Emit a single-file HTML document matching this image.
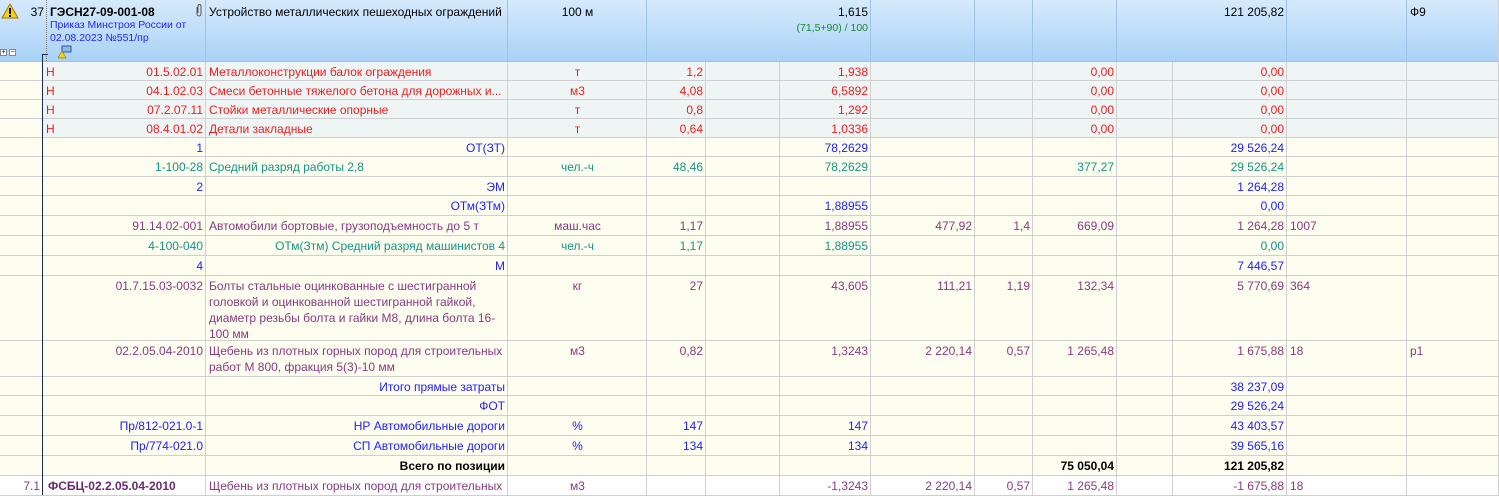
<!DOCTYPE html>
<html><head><meta charset="utf-8"><style>
*{margin:0;padding:0;box-sizing:border-box}
body{width:1499px;height:493px;overflow:hidden;background:#fdfdf0;font-family:"Liberation Sans",sans-serif;font-size:12px;position:relative}
.r{position:absolute;left:0;width:1499px;display:flex;border-bottom:1px solid #cfcfcf}
.c{height:100%;border-right:1px solid #d0d0d0;padding:2px 2px 0 3px;white-space:nowrap;overflow:hidden;line-height:16px}
.R{text-align:right}.C{text-align:center}.L{text-align:left}
.red{color:#f01c1c}.blu{color:#2020ff}.tea{color:#169484}.pur{color:#8a3a80}.blk{color:#000}
.w{white-space:normal}
</style></head><body>
<div class="r" style="top:0;height:62px;background:linear-gradient(#d6eafc,#a9d2f7);border-bottom:1px solid #9cc3e6">
 <div class="c R" style="width:47px;border-right:1px dotted #777;font-size:12px;padding-top:4px">37</div>
 <div class="c" style="width:159px;padding-top:4px;border-right-color:#9cc3e6"><b style="font-size:12px">ГЭСН27-09-001-08</b><div style="color:#2424ff;font-size:10.5px;line-height:13px;white-space:normal;margin-top:-1px">Приказ Минстроя России от 02.08.2023 №551/пр</div></div>
 <div class="c" style="width:302px;padding-top:4px;border-right-color:#9cc3e6">Устройство металлических пешеходных ограждений</div>
 <div class="c C" style="width:139px;padding-top:4px;border-right-color:#9cc3e6">100 м</div>
 <div class="c R" style="width:224px;padding-top:4px;border-right-color:#9cc3e6">1,615<div style="color:#1a8a2a;font-size:10.5px">(71,5+90) / 100</div></div>
 <div class="c" style="width:104px;border-right-color:#9cc3e6"></div>
 <div class="c" style="width:58px;border-right-color:#9cc3e6"></div>
 <div class="c" style="width:84px;border-right-color:#9cc3e6"></div>
 <div class="c R" style="width:170px;padding-top:4px;border-right-color:#9cc3e6">121 205,82</div>
 <div class="c" style="width:120px;border-right-color:#9cc3e6"></div>
 <div class="c" style="width:92px;padding-top:4px">Ф9</div>
</div>
<svg style="position:absolute;left:1px;top:3px" width="18" height="16"><path d="M9 1L17 15H1Z" fill="#f3d21a" stroke="#a07a00"/><rect x="8" y="5" width="2" height="6" fill="#000"/><rect x="8" y="12" width="2" height="2" fill="#000"/></svg>
<svg style="position:absolute;left:195px;top:3px" width="8" height="14"><path d="M2 4v7a2 2 0 0 0 4 0V3a1.3 1.3 0 0 0-3 0v7" fill="none" stroke="#555" stroke-width="1"/></svg>
<div style="position:absolute;left:0;top:49px;width:7px;height:7px;border:1px solid #888;background:#fff;font-size:7px;line-height:5px;text-align:center">+</div>
<div style="position:absolute;left:9px;top:49px;width:7px;height:7px;border:1px solid #888;background:#fff;font-size:7px;line-height:5px;text-align:center">−</div>
<svg style="position:absolute;left:58px;top:45px" width="14" height="14"><rect x="4" y="1" width="9" height="6" fill="#8fb5e0" stroke="#2a5aa0"/><path d="M4 6L8 13H0Z" fill="#f3d21a" stroke="#a07a00" stroke-width=".7"/></svg>
<div id="rows"></div>
<script>
const W=[47,159,302,139,59,74,91,104,58,84,56,114,120,92];
const rows=[
[62,19,'g','red',['','Н|01.5.02.01','Металлоконструкции балок ограждения','т','1,2','','1,938','','','0,00','','0,00','','']],
[81,19,'g','red',['','Н|04.1.02.03','Смеси бетонные тяжелого бетона для дорожных и...','м3','4,08','','6,5892','','','0,00','','0,00','','']],
[100,19,'g','red',['','Н|07.2.07.11','Стойки металлические опорные','т','0,8','','1,292','','','0,00','','0,00','','']],
[119,19,'g','red',['','Н|08.4.01.02','Детали закладные','т','0,64','','1,0336','','','0,00','','0,00','','']],
[138,19,'y','blu',['','1','>ОТ(ЗТ)','','','','78,2629','','','','','29 526,24','','']],
[157,20,'y','tea',['','1-100-28','Средний разряд работы 2,8','чел.-ч','48,46','','78,2629','','','377,27','','29 526,24','','']],
[177,19,'y','blu',['','2','>ЭМ','','','','','','','','','1 264,28','','']],
[196,20,'y','blu',['','','>ОТм(ЗТм)','','','','1,88955','','','','','0,00','','']],
[216,20,'y','pur',['','91.14.02-001','Автомобили бортовые, грузоподъемность до 5 т','маш.час','1,17','','1,88955','477,92','1,4','669,09','','1 264,28','<1007','']],
[236,20,'y','tea',['','4-100-040','>ОТм(Зтм) Средний разряд машинистов 4','чел.-ч','1,17','','1,88955','','','','','0,00','','']],
[256,20,'y','blu',['','4','>М','','','','','','','','','7 446,57','','']],
[276,65,'y','pur',['','01.7.15.03-0032','~Болты стальные оцинкованные с шестигранной головкой и оцинкованной шестигранной гайкой, диаметр резьбы болта и гайки М8, длина болта 16-100 мм','кг','27','','43,605','111,21','1,19','132,34','','5 770,69','<364','']],
[341,36,'y','pur',['','02.2.05.04-2010','~Щебень из плотных горных пород для строительных работ М 800, фракция 5(3)-10 мм','м3','0,82','','1,3243','2 220,14','0,57','1 265,48','','1 675,88','<18','<р1']],
[377,19,'y','blu',['','','>Итого прямые затраты','','','','','','','','','38 237,09','','']],
[396,20,'y','blu',['','','>ФОТ','','','','','','','','','29 526,24','','']],
[416,20,'y','blu',['','Пр/812-021.0-1','>НР Автомобильные дороги','%','147','','147','','','','','43 403,57','','']],
[436,20,'y','blu',['','Пр/774-021.0','>СП Автомобильные дороги','%','134','','134','','','','','39 565,16','','']],
[456,20,'y','blk',['','','>^Всего по позиции','','','','','','','^75 050,04','','^121 205,82','','']],
[476,20,'w','pur',['7.1','<^ФСБЦ-02.2.05.04-2010','Щебень из плотных горных пород для строительных','м3','','','-1,3243','2 220,14','0,57','1 265,48','','-1 675,88','<18','']]
];
let h='';
for(const [t,ht,bg,col,cells] of rows){
 h+=`<div class="r" style="top:${t}px;height:${ht}px;background:${bg=='g'?'#eef5f4':bg=='w'?'#fff':'#fdfdf0'}">`;
 cells.forEach((v,i)=>{
  let al=(i==2||i==12||i==13)?'L':(i==3?'C':'R');
  let cls='c '+col, s='', txt=v;
  if(txt.startsWith('>')){txt=txt.slice(1);al='R'}
  if(txt.startsWith('<')){txt=txt.slice(1);al='L'}
  if(txt.startsWith('~')){txt=txt.slice(1);cls+=' w'}
  if(txt.startsWith('^')){txt='<b>'+txt.slice(1)+'</b>'}
  if(i==0)s+='border-right:1px solid #1a2a5a;width:43px;';
  else if(i==1)s+='width:163px;';
  else s+=`width:${W[i]}px;`;
  if(i==1&&txt.includes('|')){const[a,b]=txt.split('|');txt=`<span style="float:left">${a}</span>${b}`}
  if(i==0&&bg!='w')s+='background:#fdfdf0;';
  if(i==1&&bg=='w'){s+='color:#6a2a70;padding-left:5px;'}
  h+=`<div class="${cls} ${al}" style="${s}">${txt}</div>`;
 });
 h+='</div>';
}
document.getElementById('rows').innerHTML=h;
</script>
<div style="position:absolute;left:42px;top:54px;width:6px;height:2px;border-top:1px solid #1a2a5a"></div>
<div style="position:absolute;left:42px;top:54px;width:1px;height:422px;background:#1a2a5a"></div>
</body></html>
